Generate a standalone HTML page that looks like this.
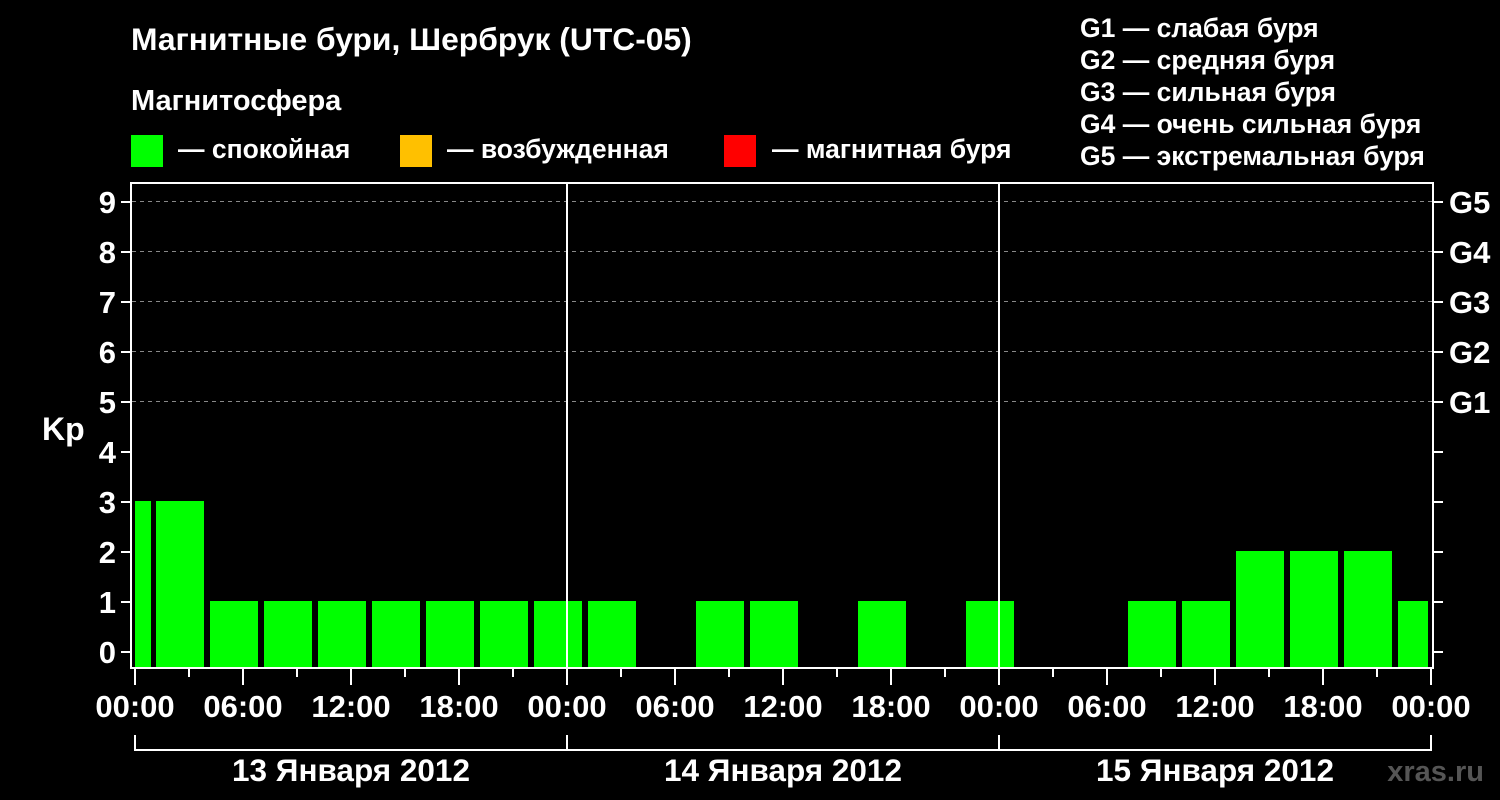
<!DOCTYPE html>
<html><head><meta charset="utf-8"><style>
html,body{margin:0;padding:0;background:#000;}
svg{display:block;font-family:"Liberation Sans",sans-serif;font-weight:bold;}
</style></head><body>
<svg width="1500" height="800" viewBox="0 0 1500 800">
<rect width="1500" height="800" fill="#000"/>
<g fill="#fff">
<text x="131" y="50" font-size="31.8">Магнитные бури, Шербрук (UTC-05)</text>
<text x="131" y="110" font-size="29">Магнитосфера</text>
<text x="178" y="158" font-size="26.5">— спокойная</text>
<text x="447" y="158" font-size="26.5">— возбужденная</text>
<text x="772" y="158" font-size="26.5">— магнитная буря</text>
<g font-size="26.5">
<text x="1080" y="37">G1 — слабая буря</text>
<text x="1080" y="69">G2 — средняя буря</text>
<text x="1080" y="101">G3 — сильная буря</text>
<text x="1080" y="133">G4 — очень сильная буря</text>
<text x="1080" y="165">G5 — экстремальная буря</text>
</g>
</g>
<rect x="131" y="135" width="32" height="32" fill="#00ff00"/>
<rect x="400" y="135" width="32" height="32" fill="#ffc000"/>
<rect x="724" y="135" width="32" height="32" fill="#ff0000"/>
<g stroke="#888" stroke-width="1" stroke-dasharray="4,4">
<line x1="132" y1="201.5" x2="1432" y2="201.5"/>
<line x1="132" y1="251.5" x2="1432" y2="251.5"/>
<line x1="132" y1="301.5" x2="1432" y2="301.5"/>
<line x1="132" y1="351.5" x2="1432" y2="351.5"/>
<line x1="132" y1="401.5" x2="1432" y2="401.5"/>
</g>
<g fill="#00ff00">
<rect x="135" y="501" width="16" height="167"/>
<rect x="156" y="501" width="48" height="167"/>
<rect x="210" y="601" width="48" height="67"/>
<rect x="264" y="601" width="48" height="67"/>
<rect x="318" y="601" width="48" height="67"/>
<rect x="372" y="601" width="48" height="67"/>
<rect x="426" y="601" width="48" height="67"/>
<rect x="480" y="601" width="48" height="67"/>
<rect x="534" y="601" width="48" height="67"/>
<rect x="588" y="601" width="48" height="67"/>
<rect x="696" y="601" width="48" height="67"/>
<rect x="750" y="601" width="48" height="67"/>
<rect x="858" y="601" width="48" height="67"/>
<rect x="966" y="601" width="48" height="67"/>
<rect x="1128" y="601" width="48" height="67"/>
<rect x="1182" y="601" width="48" height="67"/>
<rect x="1236" y="551" width="48" height="117"/>
<rect x="1290" y="551" width="48" height="117"/>
<rect x="1344" y="551" width="48" height="117"/>
<rect x="1398" y="601" width="30" height="67"/>
</g>
<g stroke="#fff" stroke-width="2" fill="none">
<rect x="131" y="183" width="1302" height="485"/>
<line x1="567" y1="183" x2="567" y2="668"/>
<line x1="999" y1="183" x2="999" y2="668"/>
<path d="M121 652h10M121 602h10M121 552h10M121 502h10M121 452h10M121 402h10M121 352h10M121 302h10M121 252h10M121 202h10"/>
<path d="M1433 652h10M1433 602h10M1433 552h10M1433 502h10M1433 452h10M1433 402h10M1433 352h10M1433 302h10M1433 252h10M1433 202h10"/>
<path d="M135 668v17M243 668v17M351 668v17M459 668v17M567 668v17M675 668v17M783 668v17M891 668v17M999 668v17M1107 668v17M1215 668v17M1323 668v17M1431 668v17"/>
<path d="M189 668v9M297 668v9M405 668v9M513 668v9M621 668v9M729 668v9M837 668v9M945 668v9M1053 668v9M1161 668v9M1269 668v9M1377 668v9"/>
<path d="M135 735v15H1431v-15M567 735v15M999 735v15"/>
</g>
<g fill="#fff" font-size="31" text-anchor="end">
<text x="116" y="663">0</text><text x="116" y="613">1</text><text x="116" y="563">2</text>
<text x="116" y="513">3</text><text x="116" y="463">4</text><text x="116" y="413">5</text>
<text x="116" y="363">6</text><text x="116" y="313">7</text><text x="116" y="263">8</text>
<text x="116" y="213">9</text>
</g>
<text x="42" y="440" fill="#fff" font-size="32">Kp</text>
<g fill="#fff" font-size="31">
<text x="1449" y="213">G5</text><text x="1449" y="263">G4</text><text x="1449" y="313">G3</text>
<text x="1449" y="363">G2</text><text x="1449" y="413">G1</text>
</g>
<g fill="#fff" font-size="31" text-anchor="middle">
<text x="135" y="717">00:00</text><text x="243" y="717">06:00</text><text x="351" y="717">12:00</text>
<text x="459" y="717">18:00</text><text x="567" y="717">00:00</text><text x="675" y="717">06:00</text>
<text x="783" y="717">12:00</text><text x="891" y="717">18:00</text><text x="999" y="717">00:00</text>
<text x="1107" y="717">06:00</text><text x="1215" y="717">12:00</text><text x="1323" y="717">18:00</text>
<text x="1431" y="717">00:00</text>
<text x="351" y="781" font-size="31.5">13 Января 2012</text>
<text x="783" y="781" font-size="31.5">14 Января 2012</text>
<text x="1215" y="781" font-size="31.5">15 Января 2012</text>
</g>
<text x="1484" y="781" fill="#555" font-size="29" text-anchor="end">xras.ru</text>
</svg>
</body></html>
